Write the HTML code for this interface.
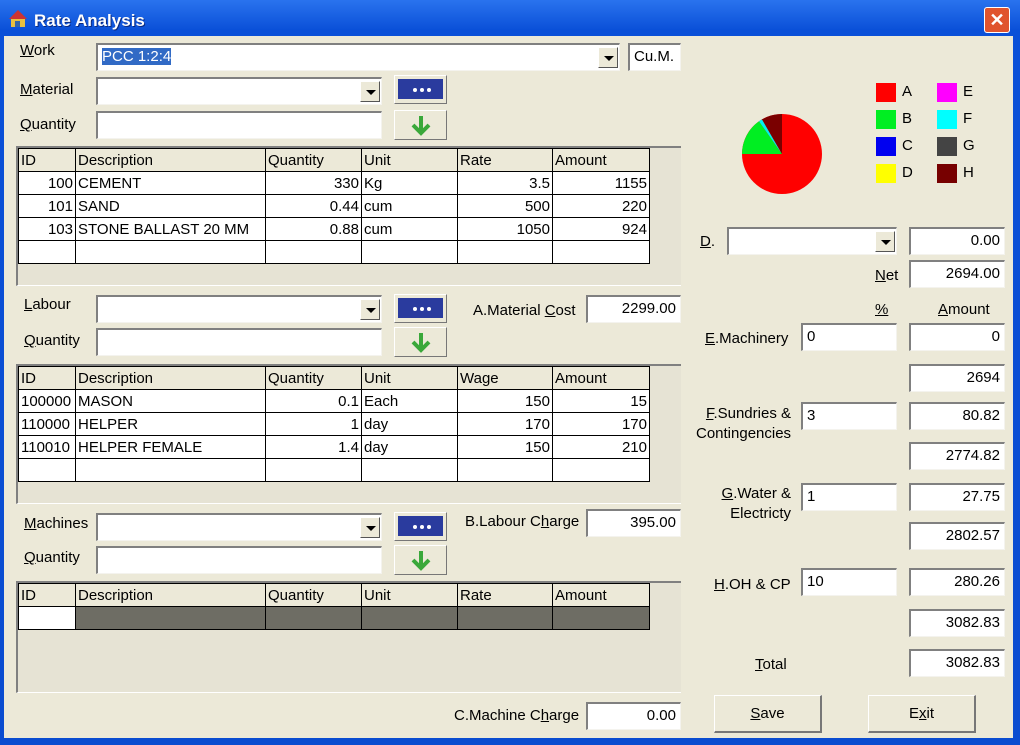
<!DOCTYPE html>
<html><head><meta charset="utf-8"><style>
*{box-sizing:border-box}
body{margin:0;width:1020px;height:745px;overflow:hidden;background:#0a4fd8;font-family:"Liberation Sans",sans-serif;font-size:15px;color:#000}
.a{position:absolute}
#win{position:absolute;left:0;top:0;width:1020px;height:745px;background:linear-gradient(#2a73ee,#0a50d8 30px,#0a4cd0);}
#body{position:absolute;left:4px;top:36px;width:1009px;height:702px;background:#ECE9D8}
.tb{position:absolute;background:#fff;border-top:2px solid #808080;border-left:2px solid #808080;border-bottom:1px solid #f4f3ee;border-right:1px solid #f4f3ee;height:28px;padding:3px 4px;white-space:nowrap;overflow:hidden}
.r{text-align:right}
.dd{position:absolute;right:1px;top:2px;width:20px;height:21px;background:#ECE9D8;border:1px solid #fff;border-right-color:#555;border-bottom-color:#555}
.dd:after{content:"";position:absolute;left:5px;top:8px;border-left:5px solid transparent;border-right:5px solid transparent;border-top:5px solid #000}
.dots{position:absolute;width:53px;height:29px;background:#ECE9D8;border:1px solid #fff;border-right-color:#777;border-bottom-color:#777}
.dots i{position:absolute;left:3px;top:3px;right:3px;bottom:4px;background:#2a3b9e;}
.dots i:after{content:"";position:absolute;left:15px;top:9px;width:4px;height:4px;border-radius:50%;background:#fff;box-shadow:7px 0 #fff,14px 0 #fff}
.arr{position:absolute;width:53px;height:30px;background:#ECE9D8;border:1px solid #fff;border-right-color:#777;border-bottom-color:#777}
.lbl{position:absolute;white-space:nowrap}
.grid{position:absolute;left:16px;width:665px;background:#E6E3D4;border-top:2px solid #808080;border-left:2px solid #808080;border-bottom:1px solid #fff}
table{border-collapse:collapse;position:absolute;left:0;top:0;table-layout:fixed}
td{border:1px solid #000;height:23px;padding:0 2px;white-space:nowrap;overflow:hidden;background:#fff;font-size:15px}
tr.h td{background:#ECE9D8;border-color:#000}
.btn{position:absolute;width:108px;height:38px;background:#ECE9D8;border:1px solid #fff;border-right:2px solid #777;border-bottom:2px solid #777;text-align:center;line-height:36px}
u{text-decoration:underline}
.sw{position:absolute;width:20px;height:19px}
</style></head><body>
<div id="win">
<div class="a" style="left:8px;top:9px;width:20px;height:20px"><svg width="20" height="20"><polygon points="10,1 1,10 19,10" fill="#c33"/><rect x="3" y="10" width="14" height="8" fill="#e8c040"/><rect x="7" y="12" width="5" height="6" fill="#36a"/></svg></div>
<div class="a" style="left:34px;top:11px;color:#fff;font-family:'Liberation Sans',sans-serif;font-weight:bold;font-size:17px;text-shadow:1px 1px #0a2a80">Rate Analysis</div>
<div class="a" style="left:984px;top:7px;width:26px;height:26px;background:#e0542e;border:1px solid #fff;border-radius:3px;color:#fff;text-align:center;font:bold 18px/24px 'Liberation Sans',sans-serif">✕</div>
<div id="body"></div>
</div>

<div class="lbl" style="left:20px;top:42px"><u>W</u>ork</div>
<div class="tb" style="left:96px;top:43px;width:524px"><span style="background:#316ac5;color:#fff">PCC 1:2:4</span><div class="dd"></div></div>
<div class="tb" style="left:628px;top:43px;width:53px;padding-left:4px">Cu.M.</div>

<div class="lbl" style="left:20px;top:81px"><u>M</u>aterial</div>
<div class="tb" style="left:96px;top:77px;width:286px"><div class="dd"></div></div>
<div class="dots" style="left:394px;top:75px"><i></i></div>
<div class="lbl" style="left:20px;top:116px"><u>Q</u>uantity</div>
<div class="tb" style="left:96px;top:111px;width:286px"></div>
<div class="arr" style="left:394px;top:110px"><svg width="53" height="30"><path d="M26 5v16M18 14l8 8 8-8" stroke="#3aa83a" stroke-width="4" fill="none"/></svg></div>

<div class="grid" style="top:146px;height:140px"><table style="width:631px">
<tr class="h"><td style="width:57px">ID</td><td style="width:190px">Description</td><td style="width:96px">Quantity</td><td style="width:96px">Unit</td><td style="width:95px">Rate</td><td style="width:97px">Amount</td></tr>
<tr><td class="r">100</td><td>CEMENT</td><td class="r">330</td><td>Kg</td><td class="r">3.5</td><td class="r">1155</td></tr>
<tr><td class="r">101</td><td>SAND</td><td class="r">0.44</td><td>cum</td><td class="r">500</td><td class="r">220</td></tr>
<tr><td class="r">103</td><td>STONE BALLAST 20 MM</td><td class="r">0.88</td><td>cum</td><td class="r">1050</td><td class="r">924</td></tr>
<tr><td></td><td></td><td></td><td></td><td></td><td></td></tr>
</table></div>

<div class="lbl" style="left:24px;top:296px"><u>L</u>abour</div>
<div class="tb" style="left:96px;top:295px;width:286px"><div class="dd"></div></div>
<div class="dots" style="left:394px;top:294px"><i></i></div>
<div class="lbl" style="left:473px;top:302px">A.Material <u>C</u>ost</div>
<div class="tb r" style="left:586px;top:295px;width:95px">2299.00</div>
<div class="lbl" style="left:24px;top:332px"><u>Q</u>uantity</div>
<div class="tb" style="left:96px;top:328px;width:286px"></div>
<div class="arr" style="left:394px;top:327px"><svg width="53" height="30"><path d="M26 5v16M18 14l8 8 8-8" stroke="#3aa83a" stroke-width="4" fill="none"/></svg></div>

<div class="grid" style="top:364px;height:140px"><table style="width:631px">
<tr class="h"><td style="width:57px">ID</td><td style="width:190px">Description</td><td style="width:96px">Quantity</td><td style="width:96px">Unit</td><td style="width:95px">Wage</td><td style="width:97px">Amount</td></tr>
<tr><td>100000</td><td>MASON</td><td class="r">0.1</td><td>Each</td><td class="r">150</td><td class="r">15</td></tr>
<tr><td>110000</td><td>HELPER</td><td class="r">1</td><td>day</td><td class="r">170</td><td class="r">170</td></tr>
<tr><td>110010</td><td>HELPER FEMALE</td><td class="r">1.4</td><td>day</td><td class="r">150</td><td class="r">210</td></tr>
<tr><td></td><td></td><td></td><td></td><td></td><td></td></tr>
</table></div>

<div class="lbl" style="left:24px;top:515px"><u>M</u>achines</div>
<div class="tb" style="left:96px;top:513px;width:286px"><div class="dd"></div></div>
<div class="dots" style="left:394px;top:512px"><i></i></div>
<div class="lbl" style="left:465px;top:513px">B.Labour C<u>h</u>arge</div>
<div class="tb r" style="left:586px;top:509px;width:95px">395.00</div>
<div class="lbl" style="left:24px;top:549px"><u>Q</u>uantity</div>
<div class="tb" style="left:96px;top:546px;width:286px"></div>
<div class="arr" style="left:394px;top:545px"><svg width="53" height="30"><path d="M26 5v16M18 14l8 8 8-8" stroke="#3aa83a" stroke-width="4" fill="none"/></svg></div>

<div class="grid" style="top:581px;height:112px"><table style="width:631px">
<tr class="h"><td style="width:57px">ID</td><td style="width:190px">Description</td><td style="width:96px">Quantity</td><td style="width:96px">Unit</td><td style="width:95px">Rate</td><td style="width:97px">Amount</td></tr>
<tr><td></td><td style="background:#6e6d64"></td><td style="background:#6e6d64"></td><td style="background:#6e6d64"></td><td style="background:#6e6d64"></td><td style="background:#6e6d64"></td></tr>
</table></div>

<div class="lbl" style="left:454px;top:707px">C.Machine C<u>h</u>arge</div>
<div class="tb r" style="left:586px;top:702px;width:95px">0.00</div>

<svg class="a" style="left:740px;top:112px" width="84" height="84"><g transform="translate(42,42)">
<circle r="40" fill="#f00"/>
<path d="M0 0L-40 0A40 40 0 0 1 -23 -32.7Z" fill="#00ee22"/>
<path d="M0 0L-23 -32.7A40 40 0 0 1 -20 -34.6Z" fill="#00f0f0"/>
<path d="M0 0L-20 -34.6A40 40 0 0 1 0 -40Z" fill="#7a0000"/>
</g></svg>
<div class="sw" style="left:876px;top:83px;background:#f00"></div><div class="lbl" style="left:902px;top:83px">A</div>
<div class="sw" style="left:876px;top:110px;background:#00ee22"></div><div class="lbl" style="left:902px;top:110px">B</div>
<div class="sw" style="left:876px;top:137px;background:#0000f0"></div><div class="lbl" style="left:902px;top:137px">C</div>
<div class="sw" style="left:876px;top:164px;background:#ff0"></div><div class="lbl" style="left:902px;top:164px">D</div>
<div class="sw" style="left:937px;top:83px;background:#f0f"></div><div class="lbl" style="left:963px;top:83px">E</div>
<div class="sw" style="left:937px;top:110px;background:#0ff"></div><div class="lbl" style="left:963px;top:110px">F</div>
<div class="sw" style="left:937px;top:137px;background:#444"></div><div class="lbl" style="left:963px;top:137px">G</div>
<div class="sw" style="left:937px;top:164px;background:#700"></div><div class="lbl" style="left:963px;top:164px">H</div>

<div class="lbl" style="left:700px;top:233px"><u>D</u>.</div>
<div class="tb" style="left:727px;top:227px;width:170px"><div class="dd"></div></div>
<div class="tb r" style="left:909px;top:227px;width:96px">0.00</div>
<div class="lbl" style="left:875px;top:267px"><u>N</u>et</div>
<div class="tb r" style="left:909px;top:260px;width:96px">2694.00</div>
<div class="lbl" style="left:875px;top:301px"><u>%</u></div>
<div class="lbl" style="left:938px;top:301px"><u>A</u>mount</div>
<div class="lbl" style="left:705px;top:330px"><u>E</u>.Machinery</div>
<div class="tb" style="left:801px;top:323px;width:96px">0</div>
<div class="tb r" style="left:909px;top:323px;width:96px">0</div>
<div class="tb r" style="left:909px;top:364px;width:96px">2694</div>
<div class="lbl" style="left:696px;top:404px;text-align:right;width:95px;line-height:20px"><u>F</u>.Sundries &amp;<br>Contingencies</div>
<div class="tb" style="left:801px;top:402px;width:96px">3</div>
<div class="tb r" style="left:909px;top:402px;width:96px">80.82</div>
<div class="tb r" style="left:909px;top:442px;width:96px">2774.82</div>
<div class="lbl" style="left:696px;top:484px;text-align:right;width:95px;line-height:20px"><u>G</u>.Water &amp;<br>Electricty</div>
<div class="tb" style="left:801px;top:483px;width:96px">1</div>
<div class="tb r" style="left:909px;top:483px;width:96px">27.75</div>
<div class="tb r" style="left:909px;top:522px;width:96px">2802.57</div>
<div class="lbl" style="left:714px;top:576px"><u>H</u>.OH &amp; CP</div>
<div class="tb" style="left:801px;top:568px;width:96px">10</div>
<div class="tb r" style="left:909px;top:568px;width:96px">280.26</div>
<div class="tb r" style="left:909px;top:609px;width:96px">3082.83</div>
<div class="lbl" style="left:755px;top:656px"><u>T</u>otal</div>
<div class="tb r" style="left:909px;top:649px;width:96px">3082.83</div>
<div class="btn" style="left:714px;top:695px"><u>S</u>ave</div>
<div class="btn" style="left:868px;top:695px">E<u>x</u>it</div>
</body></html>
